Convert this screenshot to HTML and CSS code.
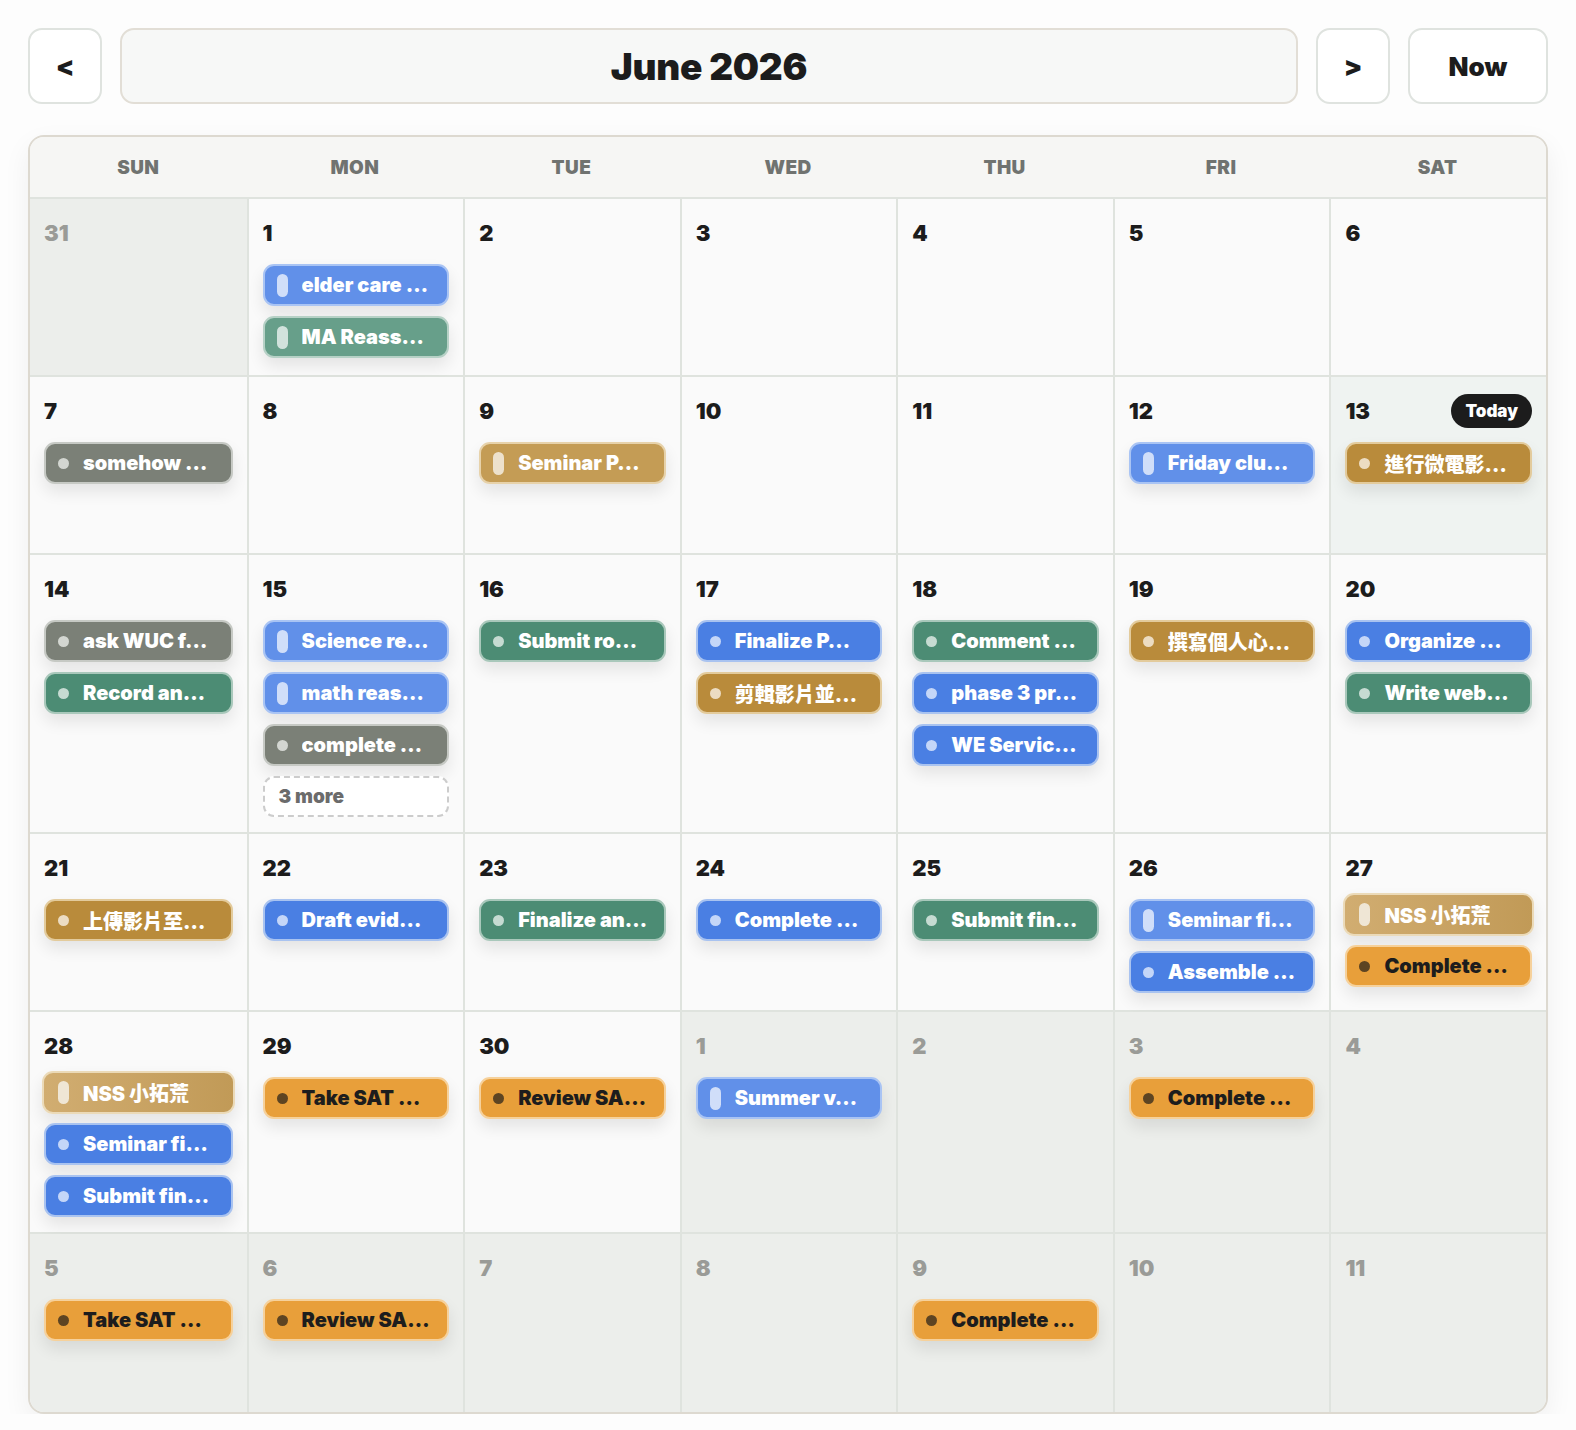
FILE: index.html
```html
<!DOCTYPE html>
<html lang="en">
<head>
<meta charset="utf-8">
<title>June 2026</title>
<link rel="stylesheet" href="styles.css">
</head>
<body>
<div class="page">
  <header class="toolbar">
    <button class="nav-btn">&lt;</button>
    <div class="month-title">June 2026</div>
    <button class="nav-btn">&gt;</button>
    <button class="nav-btn now-btn">Now</button>
  </header>

  <section class="calendar">
    <div class="weekdays">
      <div>SUN</div><div>MON</div><div>TUE</div><div>WED</div><div>THU</div><div>FRI</div><div>SAT</div>
    </div>
    <div class="days">
      <!-- week 1 -->
      <div class="day other"><div class="date">31</div></div>
      <div class="day"><div class="date">1</div>
        <div class="events">
          <div class="ev blue-soft"><span class="pill"></span><span class="label">elder care …</span></div>
          <div class="ev green-soft"><span class="pill"></span><span class="label">MA Reass…</span></div>
        </div>
      </div>
      <div class="day"><div class="date">2</div></div>
      <div class="day"><div class="date">3</div></div>
      <div class="day"><div class="date">4</div></div>
      <div class="day"><div class="date">5</div></div>
      <div class="day"><div class="date">6</div></div>

      <!-- week 2 -->
      <div class="day"><div class="date">7</div>
        <div class="events"><div class="ev gray"><span class="dot"></span><span class="label">somehow …</span></div></div>
      </div>
      <div class="day"><div class="date">8</div></div>
      <div class="day"><div class="date">9</div>
        <div class="events"><div class="ev gold-soft"><span class="pill"></span><span class="label">Seminar P…</span></div></div>
      </div>
      <div class="day"><div class="date">10</div></div>
      <div class="day"><div class="date">11</div></div>
      <div class="day"><div class="date">12</div>
        <div class="events"><div class="ev blue-soft"><span class="pill"></span><span class="label">Friday clu…</span></div></div>
      </div>
      <div class="day today"><div class="date-row"><div class="date">13</div><span class="today-badge">Today</span></div>
        <div class="events"><div class="ev gold"><span class="dot"></span><span class="label">進行微電影…</span></div></div>
      </div>

      <!-- week 3 -->
      <div class="day"><div class="date">14</div>
        <div class="events">
          <div class="ev gray"><span class="dot"></span><span class="label">ask WUC f…</span></div>
          <div class="ev green"><span class="dot"></span><span class="label">Record an…</span></div>
        </div>
      </div>
      <div class="day"><div class="date">15</div>
        <div class="events">
          <div class="ev blue-soft"><span class="pill"></span><span class="label">Science re…</span></div>
          <div class="ev blue-soft"><span class="pill"></span><span class="label">math reas…</span></div>
          <div class="ev gray"><span class="dot"></span><span class="label">complete …</span></div>
          <div class="more">3 more</div>
        </div>
      </div>
      <div class="day"><div class="date">16</div>
        <div class="events"><div class="ev green"><span class="dot"></span><span class="label">Submit ro…</span></div></div>
      </div>
      <div class="day"><div class="date">17</div>
        <div class="events">
          <div class="ev blue"><span class="dot"></span><span class="label">Finalize P…</span></div>
          <div class="ev gold"><span class="dot"></span><span class="label">剪輯影片並…</span></div>
        </div>
      </div>
      <div class="day"><div class="date">18</div>
        <div class="events">
          <div class="ev green"><span class="dot"></span><span class="label">Comment …</span></div>
          <div class="ev blue"><span class="dot"></span><span class="label">phase 3 pr…</span></div>
          <div class="ev blue"><span class="dot"></span><span class="label">WE Servic…</span></div>
        </div>
      </div>
      <div class="day"><div class="date">19</div>
        <div class="events"><div class="ev gold"><span class="dot"></span><span class="label">撰寫個人心…</span></div></div>
      </div>
      <div class="day"><div class="date">20</div>
        <div class="events">
          <div class="ev blue"><span class="dot"></span><span class="label">Organize …</span></div>
          <div class="ev green"><span class="dot"></span><span class="label">Write web…</span></div>
        </div>
      </div>

      <!-- week 4 -->
      <div class="day"><div class="date">21</div>
        <div class="events"><div class="ev gold"><span class="dot"></span><span class="label">上傳影片至…</span></div></div>
      </div>
      <div class="day"><div class="date">22</div>
        <div class="events"><div class="ev blue"><span class="dot"></span><span class="label">Draft evid…</span></div></div>
      </div>
      <div class="day"><div class="date">23</div>
        <div class="events"><div class="ev green"><span class="dot"></span><span class="label">Finalize an…</span></div></div>
      </div>
      <div class="day"><div class="date">24</div>
        <div class="events"><div class="ev blue"><span class="dot"></span><span class="label">Complete …</span></div></div>
      </div>
      <div class="day"><div class="date">25</div>
        <div class="events"><div class="ev green"><span class="dot"></span><span class="label">Submit fin…</span></div></div>
      </div>
      <div class="day"><div class="date">26</div>
        <div class="events">
          <div class="ev blue-soft"><span class="pill"></span><span class="label">Seminar fi…</span></div>
          <div class="ev blue"><span class="dot"></span><span class="label">Assemble …</span></div>
        </div>
      </div>
      <div class="day"><div class="date">27</div>
        <div class="events">
          <div class="ev nss"><span class="pill"></span><span class="label">NSS 小拓荒</span></div>
          <div class="ev orange"><span class="dot"></span><span class="label">Complete …</span></div>
        </div>
      </div>

      <!-- week 5 -->
      <div class="day"><div class="date">28</div>
        <div class="events">
          <div class="ev nss"><span class="pill"></span><span class="label">NSS 小拓荒</span></div>
          <div class="ev blue"><span class="dot"></span><span class="label">Seminar fi…</span></div>
          <div class="ev blue"><span class="dot"></span><span class="label">Submit fin…</span></div>
        </div>
      </div>
      <div class="day"><div class="date">29</div>
        <div class="events"><div class="ev orange"><span class="dot"></span><span class="label">Take SAT …</span></div></div>
      </div>
      <div class="day"><div class="date">30</div>
        <div class="events"><div class="ev orange"><span class="dot"></span><span class="label">Review SA…</span></div></div>
      </div>
      <div class="day other"><div class="date">1</div>
        <div class="events"><div class="ev blue-soft"><span class="pill"></span><span class="label">Summer v…</span></div></div>
      </div>
      <div class="day other"><div class="date">2</div></div>
      <div class="day other"><div class="date">3</div>
        <div class="events"><div class="ev orange"><span class="dot"></span><span class="label">Complete …</span></div></div>
      </div>
      <div class="day other"><div class="date">4</div></div>

      <!-- week 6 -->
      <div class="day other last-row"><div class="date">5</div>
        <div class="events"><div class="ev orange"><span class="dot"></span><span class="label">Take SAT …</span></div></div>
      </div>
      <div class="day other last-row"><div class="date">6</div>
        <div class="events"><div class="ev orange"><span class="dot"></span><span class="label">Review SA…</span></div></div>
      </div>
      <div class="day other last-row"><div class="date">7</div></div>
      <div class="day other last-row"><div class="date">8</div></div>
      <div class="day other last-row"><div class="date">9</div>
        <div class="events"><div class="ev orange"><span class="dot"></span><span class="label">Complete …</span></div></div>
      </div>
      <div class="day other last-row"><div class="date">10</div></div>
      <div class="day other last-row"><div class="date">11</div></div>
    </div>
  </section>
</div>
</body>
</html>
```
FILE: styles.css
```css
* { box-sizing: border-box; }

html, body {
  margin: 0;
  background: #fdfdfd;
}

body {
  font-family: Inter, "Noto Sans", "Noto Sans CJK TC", sans-serif;
  color: #1c1c1c;
}

.page {
  padding: 28px 28px 0;
}

/* toolbar */
.toolbar {
  display: flex;
  gap: 18px;
  height: 76px;
}

.nav-btn {
  width: 74px;
  flex: none;
  border: 2px solid #dfe3df;
  border-radius: 14px;
  background: #fff;
  font-family: inherit;
  font-size: 27px;
  font-weight: 900;
  color: #1c1c1c;
  padding: 0;
  cursor: pointer;
}

.now-btn {
  width: 140px;
  font-size: 26px;
}

.month-title {
  flex: 1;
  display: flex;
  align-items: center;
  justify-content: center;
  border: 2px solid #e2ded6;
  border-radius: 14px;
  background: #f7f8f7;
  font-size: 37px;
  font-weight: 900;
  letter-spacing: -0.3px;
}

/* calendar frame */
.calendar {
  margin-top: 31px;
  border: 2px solid #ddd9d0;
  border-radius: 16px;
  overflow: hidden;
  background: #fafafa;
  box-shadow: 0 10px 28px rgba(0, 0, 0, 0.06);
}

.weekdays {
  display: grid;
  grid-template-columns: repeat(7, 1fr);
  height: 62px;
  background: #f6f6f4;
  border-bottom: 2px solid #dfe3de;
}

.weekdays div {
  display: flex;
  align-items: center;
  justify-content: center;
  font-size: 19px;
  font-weight: 900;
  color: #707370;
  letter-spacing: 0.4px;
}

.days {
  display: grid;
  grid-template-columns: repeat(7, 1fr);
  grid-auto-rows: minmax(178px, auto);
}

/* grid lines sit on the left of every column but the first */
.day {
  padding: 20px 14px 15px;
  border-left: 2px solid #dfe3de;
  border-bottom: 2px solid #dfe3de;
  background: #fafafa;
  min-width: 0;
}

.day:nth-child(7n + 1) { border-left: none; padding-left: 14px; }
.day.last-row { border-bottom: none; }

.day.other { background: #eceeeb; }
.day.other .date { color: #9a9b97; }

.day.today { background: #eff3f1; }

.date {
  font-size: 22px;
  line-height: 28px;
  font-weight: 900;
  color: #1c1c1c;
}

.date-row {
  display: flex;
  justify-content: space-between;
  align-items: center;
  height: 28px;
}

.today-badge {
  background: #1c1c1c;
  color: #fff;
  font-size: 17px;
  font-weight: 900;
  height: 34px;
  line-height: 34px;
  padding: 0 14px;
  border-radius: 17px;
}

.events {
  margin-top: 17px;
  display: flex;
  flex-direction: column;
  gap: 10px;
}

/* event chip */
.ev {
  height: 42px;
  display: flex;
  align-items: center;
  gap: 14px;
  padding: 0 14px 0 12px;
  border: 2px solid transparent;
  border-radius: 11px;
  color: #fff;
  font-size: 20px;
  font-weight: 900;
  box-shadow: 0 8px 16px rgba(0, 0, 0, 0.09);
  min-width: 0;
}

.ev .label {
  white-space: nowrap;
  overflow: hidden;
  text-overflow: ellipsis;
  min-width: 0;
}

.ev .dot {
  flex: none;
  width: 11px;
  height: 11px;
  border-radius: 50%;
}

.ev .pill {
  flex: none;
  width: 11px;
  height: 23px;
  border-radius: 6px;
  background: rgba(255, 255, 255, 0.7);
}

.ev.blue-soft { background: #6190e9; border-color: #a9c4f4; }
.ev.blue { background: #4a7fe3; border-color: #a9c3f0; }
.ev.blue .dot { background: #c4d6f8; }

.ev.green-soft { background: #679f8a; border-color: #b6d1c6; }
.ev.green { background: #4c8c74; border-color: #a9c8bb; }
.ev.green .dot { background: #c6dbd2; }

.ev.gray { background: #7b8077; border-color: #c6c9c4; }
.ev.gray .dot { background: #d3d6d1; }

.ev.gold { background: #b98b3b; border-color: #e3cb9c; }
.ev.gold .dot { background: #ecdcc2; }
.ev.gold-soft { background: #c49c55; border-color: #e7d2aa; }

.ev.orange { background: #e89f3a; border-color: #f6d19b; color: #1d1d1d; }
.ev.orange .dot { background: #5d4422; }

.ev.nss {
  background: linear-gradient(90deg, #d1ad71, #c19a57);
  border-color: #ebdab8;
  height: 43px;
  margin: -6px -2px -1px;
  padding-left: 14px;
}
.ev.nss .pill { background: #efe6d5; }

.more {
  height: 41px;
  display: flex;
  align-items: center;
  padding: 0 14px;
  border: 2px dashed #cccccc;
  border-radius: 11px;
  background: #fff;
  color: #6b6b6b;
  font-size: 19px;
  font-weight: 900;
}
```
